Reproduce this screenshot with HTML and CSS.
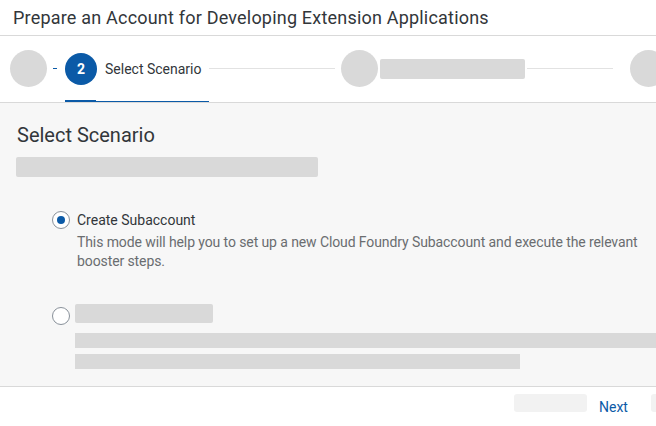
FILE: index.html
```html
<!DOCTYPE html>
<html>
<head>
<meta charset="utf-8">
<link rel="stylesheet" href="styles.css">
</head>
<body>
<div class="page">
  <header class="title-bar">Prepare an Account for Developing Extension Applications</header>
  <nav class="stepper">
    <span class="step-circle"></span>
    <span class="dash"></span>
    <span class="step-circle active">2</span>
    <span class="step-label">Select Scenario</span>
    <span class="step-line l1"></span>
    <span class="step-circle c3"></span>
    <span class="ph-label"></span>
    <span class="step-line l2"></span>
    <span class="step-circle c4"></span>
    <span class="underline"></span>
  </nav>
  <main class="content">
    <h1 class="heading">Select Scenario</h1>
    <div class="ph-sub"></div>
    <div class="options">
      <div class="option">
        <span class="radio checked"></span>
        <div class="opt-body">
          <div class="opt-title">Create Subaccount</div>
          <div class="opt-desc">This mode will help you to set up a new Cloud Foundry Subaccount and execute the relevant booster steps.</div>
        </div>
      </div>
      <div class="option second">
        <span class="radio"></span>
        <div class="opt-body">
          <div class="ph-title"></div>
          <div class="ph-line full"></div>
          <div class="ph-line part"></div>
        </div>
      </div>
    </div>
  </main>
  <footer class="footer">
    <span class="ph-btn"></span>
    <span class="next">Next</span>
    <span class="ph-btn last"></span>
  </footer>
</div>
</body>
</html>
```

FILE: styles.css
```css
* { box-sizing: border-box; }
html, body { margin: 0; padding: 0; }
body {
  font-family: Roboto, "Liberation Sans", sans-serif;
  color: #32363a;
  background: #fff;
}
.page {
  width: 656px;
  height: 426px;
  overflow: hidden;
  display: flex;
  flex-direction: column;
}
.title-bar {
  height: 36px;
  line-height: 35px;
  padding-left: 13px;
  font-size: 18px;
  letter-spacing: 0.2px;
  border-bottom: 1px solid #d9d9d9;
  white-space: nowrap;
}
.stepper {
  position: relative;
  height: 67px;
  border-bottom: 1px solid #d9d9d9;
  display: flex;
  align-items: center;
  padding-left: 10px;
  padding-bottom: 1px;
  white-space: nowrap;
  overflow: hidden;
}
.step-circle {
  flex: none;
  width: 37px;
  height: 37px;
  border-radius: 50%;
  background: #d9d9d9;
}
.step-circle.active {
  width: 32px;
  height: 32px;
  margin-left: 8px;
  background: #0b5aa7;
  color: #fff;
  font-weight: 700;
  font-size: 14px;
  display: flex;
  align-items: center;
  justify-content: center;
}
.dash {
  flex: none;
  width: 4px;
  height: 1px;
  margin-left: 6px;
  background: #0b5aa7;
}
.step-label {
  margin-left: 8px;
  font-size: 14px;
  flex: none;
  width: 96px;
}
.step-line {
  flex: none;
  height: 1px;
  background: #e2e2e2;
}
.l1 { width: 126px; margin-left: 8px; }
.c3 { margin-left: 6px; }
.ph-label {
  flex: none;
  width: 145px;
  height: 20px;
  margin-left: 2px;
  border-radius: 2px;
  background: #d9d9d9;
}
.l2 { width: 86px; margin-left: 2px; }
.c4 { margin-left: 17px; }
.underline {
  position: absolute;
  left: 65px;
  bottom: -1px;
  width: 144px;
  height: 2px;
  background: #0b5aa7;
}
.underline::before {
  content: "";
  position: absolute;
  left: 0;
  top: -1px;
  width: 31px;
  height: 1px;
  background: #0b5aa7;
}
.content {
  background: #f7f7f7;
  height: 284px;
  border-bottom: 1px solid #d9d9d9;
  padding: 20px 0 0 16px;
  overflow: hidden;
}
.heading {
  margin: 0;
  font-size: 20px;
  font-weight: 400;
  line-height: 24px;
  padding-left: 1px;
}
.ph-sub {
  width: 302px;
  height: 20px;
  margin-top: 10px;
  background: #d9d9d9;
  border-radius: 2px;
}
.options {
  margin-top: 33px;
  padding-left: 36px;
}
.option {
  display: flex;
  align-items: flex-start;
}
.radio {
  flex: none;
  width: 18px;
  height: 18px;
  border-radius: 50%;
  border: 1px solid #89919a;
  background: #fff;
  position: relative;
  margin-top: 1px;
}
.radio.checked::after {
  content: "";
  position: absolute;
  left: 4px;
  top: 4px;
  width: 8px;
  height: 8px;
  border-radius: 50%;
  background: #0b5aa7;
}
.opt-body {
  margin-left: 7px;
  flex: 1;
}
.opt-title {
  font-size: 14px;
  line-height: 20px;
}
.opt-desc {
  margin-top: 3px;
  font-size: 14px;
  line-height: 19px;
  letter-spacing: -0.1px;
  color: #6a6d70;
}
.option.second {
  margin-top: 33px;
}
.option.second .radio { margin-top: 3px; }
.option.second .opt-body { margin-left: 5px; }
.ph-title {
  width: 138px;
  height: 19px;
  background: #d9d9d9;
  border-radius: 2px;
}
.ph-line {
  height: 15px;
  background: #d9d9d9;
}
.ph-line.full { margin-top: 10px; width: 600px; }
.ph-line.part { margin-top: 6px; width: 445px; }
.footer {
  flex: 1;
  background: #fff;
  display: flex;
  align-items: flex-start;
  padding-left: 514px;
  padding-top: 7px;
  white-space: nowrap;
}
.ph-btn {
  flex: none;
  width: 73px;
  height: 18px;
  background: #f2f2f2;
  border-radius: 3px;
}
.next {
  margin-left: 12px;
  font-size: 14px;
  color: #0b5aa7;
  line-height: 26px;
}
.ph-btn.last { margin-left: 23px; width: 40px; }
```
